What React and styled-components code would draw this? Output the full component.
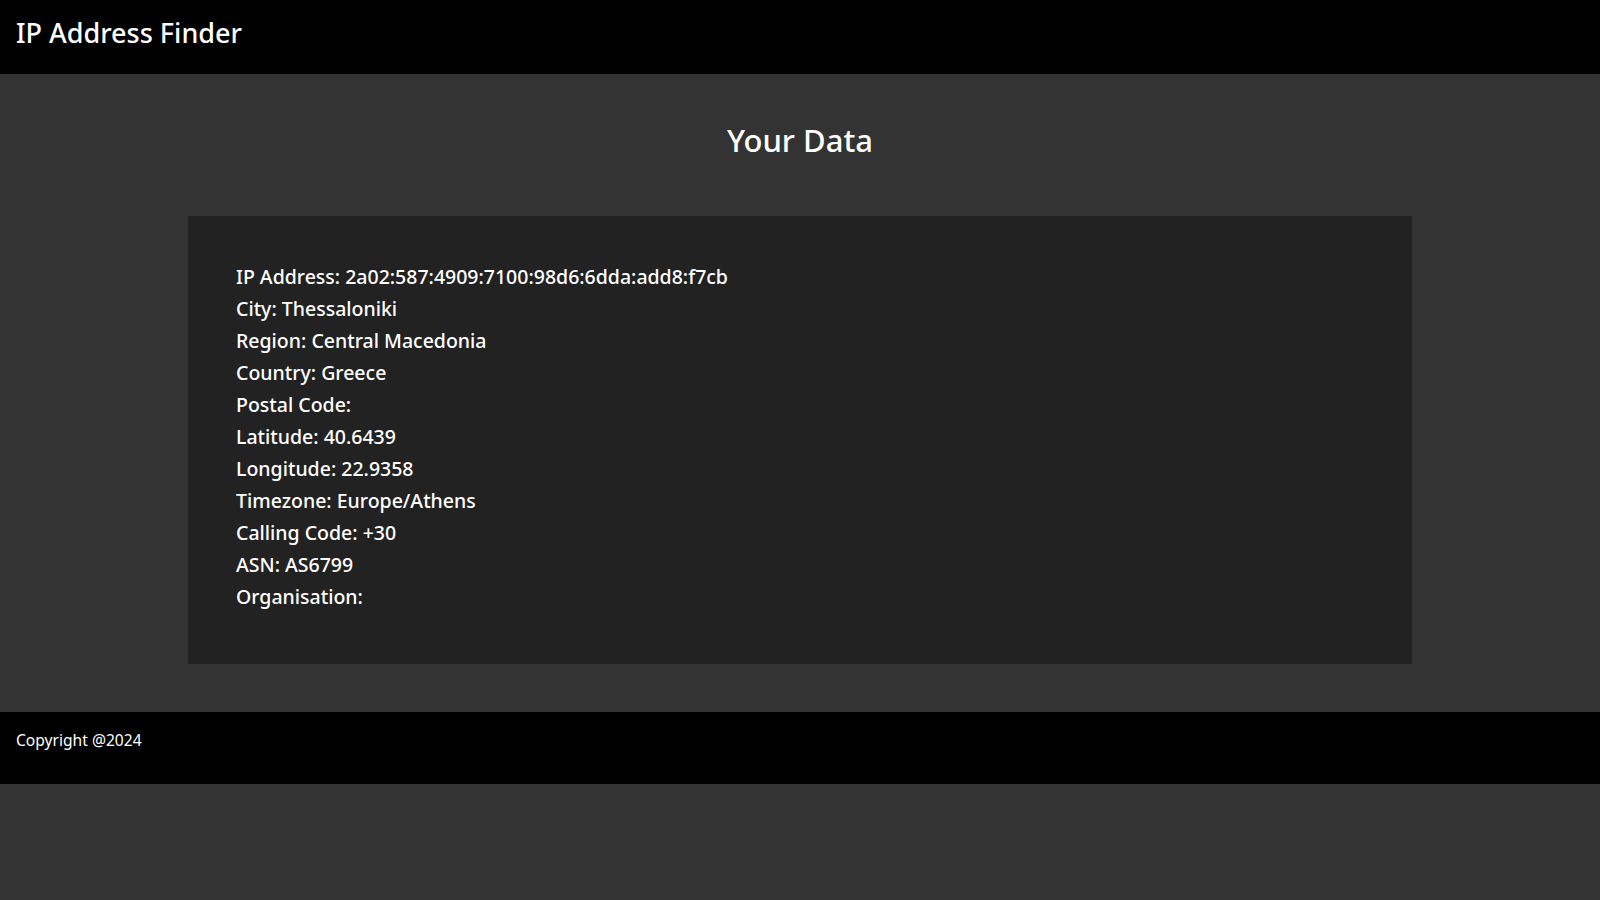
import React from 'react'
import { styled, createGlobalStyle } from "styled-components";

const GlobalStyle = createGlobalStyle`
body {
    margin: 0;
    background: #333333;
    font-family: "Noto Sans", "Open Sans", sans-serif;
    color: #ffffff;
}
`;

const data = [
    ["IP Address", "2a02:587:4909:7100:98d6:6dda:add8:f7cb"],
    ["City", "Thessaloniki"],
    ["Region", "Central Macedonia"],
    ["Country", "Greece"],
    ["Postal Code", ""],
    ["Latitude", "40.6439"],
    ["Longitude", "22.9358"],
    ["Timezone", "Europe/Athens"],
    ["Calling Code", "+30"],
    ["ASN", "AS6799"],
    ["Organisation", ""],
];

const App = () => {
    return (
        <>
            <GlobalStyle />
            <Header>
                <Title>IP Address Finder</Title>
            </Header>
            <Main>
                <Heading>Your Data</Heading>
                <Card>
                    {data.map(([label, value]) => (
                        <Row key={label}>{label}: {value}</Row>
                    ))}
                </Card>
            </Main>
            <Footer>
                <Copy>Copyright @2024</Copy>
            </Footer>
        </>
    )
}

const Header = styled.header`
height: 74px;
background: #000000;
display: flex;
align-items: center;
padding: 0 16px;
padding-bottom: 10px;
box-sizing: border-box;
`;

const Title = styled.h1`
margin: 0;
font-size: 27px;
font-weight: 500;
`;

const Main = styled.main`
padding: 45px 0 48px;
`;

const Heading = styled.h2`
margin: 0 0 55px;
text-align: center;
font-size: 31px;
font-weight: 500;
line-height: 42px;
`;

const Card = styled.section`
width: 1224px;
margin: 0 auto;
background: #222222;
padding: 45px 46px 51px 48px;
box-sizing: border-box;
`;

const Row = styled.p`
margin: 0;
font-size: 19.5px;
font-weight: 500;
line-height: 32px;
`;

const Footer = styled.footer`
height: 72px;
background: #000000;
padding: 17px 16px 0;
box-sizing: border-box;
`;

const Copy = styled.p`
margin: 0;
font-size: 15.6px;
`;

export default App
